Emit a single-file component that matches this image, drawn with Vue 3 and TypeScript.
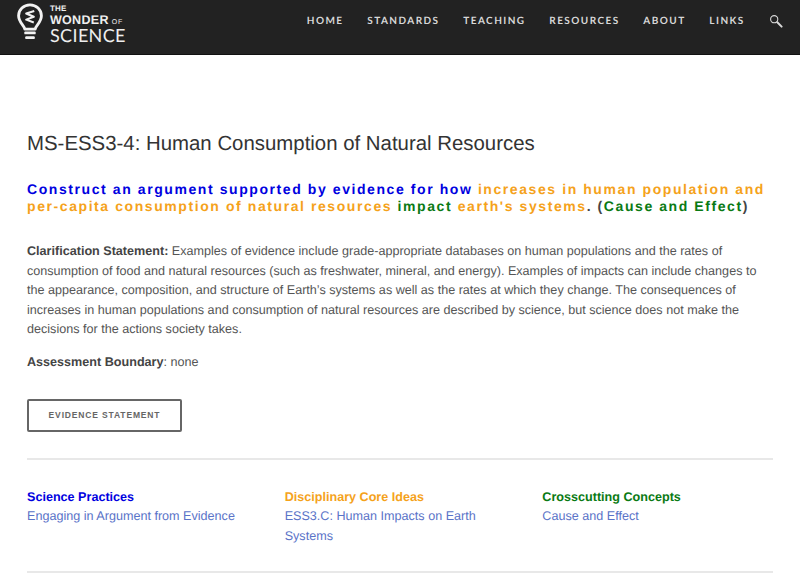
<script setup lang="ts">
const nav: string[] = ['HOME', 'STANDARDS', 'TEACHING', 'RESOURCES', 'ABOUT', 'LINKS']
const columns = [
  { title: 'Science Practices', cls: 'blue', link: 'Engaging in Argument from Evidence' },
  { title: 'Disciplinary Core Ideas', cls: 'orange', link: 'ESS3.C: Human Impacts on Earth Systems' },
  { title: 'Crosscutting Concepts', cls: 'green', link: 'Cause and Effect' },
]
</script>

<template>
  <div class="page">
    <header class="header">
      <div class="logo">
        <svg class="bulb" width="28" height="38" viewBox="0 0 28 40" fill="none">
          <path d="M8.5 27.5C8 23.5 2 20.5 2 13.5C2 7 7.3 2 14 2C20.7 2 26 7 26 13.5C26 20.5 20 23.5 19.5 27.5Z" stroke="#f2f2f2" stroke-width="3" stroke-linejoin="round" />
          <path d="M18.5 8.5L10 11L18 14.5L10 17.5L18 20.5" stroke="#f2f2f2" stroke-width="2.2" stroke-linejoin="round" />
          <rect x="8" y="30" width="12" height="3" rx="1" fill="#f2f2f2" />
          <rect x="9" y="35" width="10" height="3" rx="1" fill="#f2f2f2" />
        </svg>
        <div class="wordmark">
          <div class="the">THE</div>
          <div class="wonder">WONDER<span class="of">OF</span></div>
          <div class="science">SCIENCE</div>
        </div>
      </div>
      <nav class="nav">
        <a v-for="item in nav" :key="item" class="nav-link">{{ item }}</a>
        <svg class="search" width="14" height="14" viewBox="0 0 14 14" fill="none">
          <circle cx="5.2" cy="5.2" r="3.6" stroke="#d8d8d8" stroke-width="1.1" />
          <path d="M8.3 8.3L12.6 12.6" stroke="#d8d8d8" stroke-width="2" stroke-linecap="round" />
        </svg>
      </nav>
    </header>

    <main class="main">
      <h1 class="title">MS-ESS3-4: Human Consumption of Natural Resources</h1>
      <p class="statement">
        <span class="blue">Construct an argument supported by evidence for how </span>
        <span class="orange">increases in human population and per-capita consumption of natural resources </span>
        <span class="green">impact </span>
        <span class="orange">earth's systems</span>. (<span class="green">Cause and Effect</span>)
      </p>
      <p class="body-text clarification">
        <strong>Clarification Statement:</strong> Examples of evidence include grade-appropriate databases on human populations and the rates of consumption of food and natural resources (such as freshwater, mineral, and energy). Examples of impacts can include changes to the appearance, composition, and structure of Earth’s systems as well as the rates at which they change. The consequences of increases in human populations and consumption of natural resources are described by science, but science does not make the decisions for the actions society takes.
      </p>
      <p class="body-text boundary"><strong>Assessment Boundary</strong>: none</p>
      <button class="evidence" type="button">EVIDENCE STATEMENT</button>
      <div class="columns">
        <div v-for="col in columns" :key="col.title" class="column">
          <div class="col-title" :class="col.cls">{{ col.title }}</div>
          <a class="col-link">{{ col.link }}</a>
        </div>
      </div>
    </main>
  </div>
</template>

<style>
html, body { margin: 0; background: #fff; }
</style>

<style scoped>
.page {
  height: 575px;
  overflow: hidden;
  font-family: "Liberation Sans", Arial, sans-serif;
  color: #444;
  text-rendering: geometricPrecision;
}
.header {
  height: 55px;
  box-sizing: border-box;
  background: #222;
  border-bottom: 1px solid #111;
  display: flex;
  justify-content: space-between;
  padding: 0 17px 0 16px;
}
.logo {
  display: flex;
  align-items: flex-start;
  gap: 6px;
  padding-top: 3px;
}
.wordmark {
  color: #eee;
  padding-top: 1px;
}
.the { font-size: 8px; line-height: 9px; font-weight: 700; letter-spacing: 0.2px; }
.wonder { font-size: 12.5px; line-height: 13px; margin-top: 1px; font-weight: 700; letter-spacing: 0.3px; white-space: nowrap; }
.of { font-size: 7px; font-weight: 400; margin-left: 3px; letter-spacing: 0.8px; }
.science { font-family: Lato, sans-serif; font-size: 18px; line-height: 17px; margin-top: -2px; letter-spacing: 0.35px; }
.nav {
  display: flex;
  align-items: center;
  gap: 23.7px;
  height: 41px;
}
.nav-link {
  font-family: Lato, sans-serif;
  font-size: 10px;
  font-weight: 700;
  letter-spacing: 1.45px;
  color: #d8d8d8;
}
.search { margin-left: 0.5px; }
.main { padding: 0 27px; }
.title {
  margin: 77px 0 0;
  font-size: 20.4px;
  line-height: 24px;
  font-weight: 400;
  color: #333;
}
.statement {
  margin: 25px 0 0;
  font-size: 14px;
  line-height: 17px;
  font-weight: 700;
  letter-spacing: 1.58px;
  color: #444;
}
.blue { color: #0000e0; }
.orange { color: #f5a21b; }
.green { color: #0a7a14; }
.body-text {
  font-size: 12.6px;
  line-height: 19.6px;
  color: #555;
  max-width: 742px;
}
.body-text strong { color: #444; }
.clarification { margin: 27px 0 0; }
.boundary { margin: 13px 0 0; }
.evidence {
  display: block;
  margin: 26px 0 0;
  width: 155px;
  height: 33px;
  background: #fff;
  border: 2px solid #666;
  border-radius: 2px;
  font-family: "Liberation Sans", Arial, sans-serif;
  font-size: 8.5px;
  font-weight: 700;
  letter-spacing: 0.85px;
  color: #666;
  padding: 0;
}
.columns {
  margin-top: 26px;
  padding: 28px 0 25px;
  border-top: 2px solid #e8e8e8;
  border-bottom: 2px solid #e8e8e8;
  display: grid;
  grid-template-columns: repeat(3, 1fr);
  column-gap: 27px;
}
.col-title {
  font-size: 12.6px;
  line-height: 19.6px;
  font-weight: 700;
}
.col-link {
  display: block;
  font-size: 12.6px;
  line-height: 19.6px;
  color: #5a73c8;
}
</style>
